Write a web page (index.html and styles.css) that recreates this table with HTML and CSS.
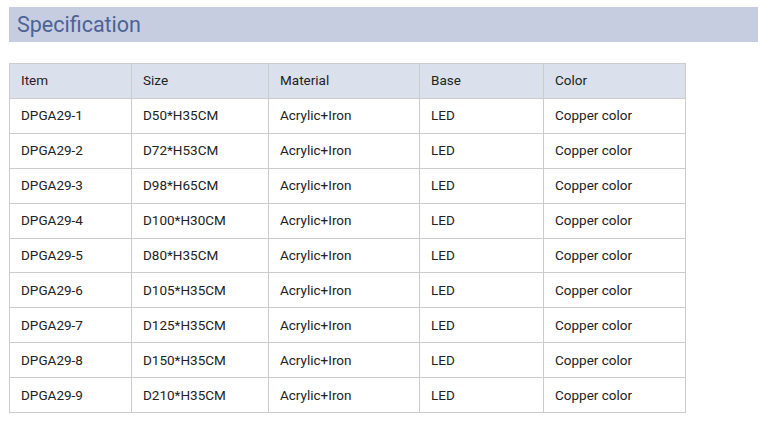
FILE: index.html
```html
<!DOCTYPE html>
<html>
<head>
<meta charset="utf-8">
<link rel="stylesheet" href="styles.css">
</head>
<body>
<h2 class="title">Specification</h2>
<table class="spec">
<colgroup>
<col class="c1"><col class="c2"><col class="c3"><col class="c4"><col class="c5">
</colgroup>
<thead>
<tr><th>Item</th><th>Size</th><th>Material</th><th>Base</th><th>Color</th></tr>
</thead>
<tbody>
<tr><td>DPGA29-1</td><td>D50*H35CM</td><td>Acrylic+Iron</td><td>LED</td><td>Copper color</td></tr>
<tr><td>DPGA29-2</td><td>D72*H53CM</td><td>Acrylic+Iron</td><td>LED</td><td>Copper color</td></tr>
<tr><td>DPGA29-3</td><td>D98*H65CM</td><td>Acrylic+Iron</td><td>LED</td><td>Copper color</td></tr>
<tr><td>DPGA29-4</td><td>D100*H30CM</td><td>Acrylic+Iron</td><td>LED</td><td>Copper color</td></tr>
<tr><td>DPGA29-5</td><td>D80*H35CM</td><td>Acrylic+Iron</td><td>LED</td><td>Copper color</td></tr>
<tr><td>DPGA29-6</td><td>D105*H35CM</td><td>Acrylic+Iron</td><td>LED</td><td>Copper color</td></tr>
<tr><td>DPGA29-7</td><td>D125*H35CM</td><td>Acrylic+Iron</td><td>LED</td><td>Copper color</td></tr>
<tr><td>DPGA29-8</td><td>D150*H35CM</td><td>Acrylic+Iron</td><td>LED</td><td>Copper color</td></tr>
<tr><td>DPGA29-9</td><td>D210*H35CM</td><td>Acrylic+Iron</td><td>LED</td><td>Copper color</td></tr>
</tbody>
</table>
</body>
</html>
```
FILE: styles.css
```css
html, body { background: #fff; }
body {
  margin: 7px 11px 0 9px;
  font-family: Roboto, "Liberation Sans", sans-serif;
  color: #222;
}
.title {
  margin: 0;
  height: 35px;
  line-height: 36px;
  background: #c6cde0;
  color: #4d6296;
  font-size: 21.5px;
  font-weight: 400;
  padding-left: 8px;
}
.spec {
  margin-top: 21px;
  border-collapse: collapse;
  table-layout: fixed;
  width: 676px;
  font-size: 13.5px;
}
.c1 { width: 122px; }
.c2 { width: 137px; }
.c3 { width: 151px; }
.c4 { width: 124px; }
.c5 { width: 142px; }
.spec th, .spec td {
  border: 1px solid #cccccc;
  padding: 0 0 1px 11px;
  text-align: left;
  font-weight: 400;
  box-sizing: border-box;
}
.spec th { height: 35px; background: #dae1ec; padding-bottom: 2px; }
.spec td { height: 34.9px; }
```
